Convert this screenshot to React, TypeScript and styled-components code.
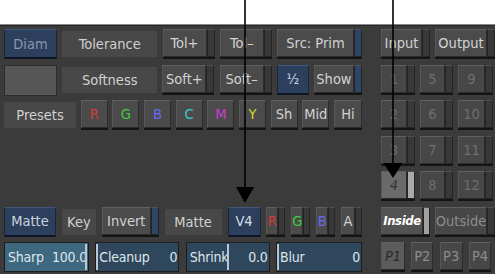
import styled, { createGlobalStyle } from 'styled-components'

const GlobalStyle = createGlobalStyle`
  html, body {
    margin: 0;
    padding: 0;
    background: #ffffff;
  }
  body {
    font-family: "DejaVu Sans Condensed", "DejaVu Sans", sans-serif;
    font-stretch: condensed;
  }
`

const Page = styled.div`
  position: relative;
  width: 495px;
  height: 274px;
  overflow: hidden;
  padding-top: 24px;
  box-sizing: border-box;
`

const Panel = styled.div`
  height: 250px;
  box-sizing: border-box;
  background: #3b3b3b;
  border-top: 1px solid #8a8a8a;
  box-shadow: inset 0 1px 0 #262626;
  padding: 4px 0 0 4px;
  display: flex;
  gap: 19px;
`

const Area = styled.div<{ $w: number }>`
  width: ${p => p.$w}px;
  flex: none;
  display: grid;
  grid-template-rows: repeat(7, 30px);
  row-gap: 5.5px;
`

const Row = styled.div<{ $row?: number; $pr?: number }>`
  display: flex;
  justify-content: space-between;
  align-items: flex-start;
  padding-right: ${p => p.$pr || 0}px;
  ${p => (p.$row ? `grid-row: ${p.$row};` : '')}
`

const Btn = styled.div<{ $w: number }>`
  width: ${p => p.$w}px;
  height: 30px;
  flex: none;
  display: flex;
  box-sizing: border-box;
  border-bottom: 2px solid #141414;
`

const Face = styled.div<{ $bg?: string; $color?: string; $italic?: boolean; $bold?: boolean }>`
  flex: 1;
  display: flex;
  align-items: center;
  justify-content: center;
  background: ${p => p.$bg || '#4b4b4b'};
  border: 1px solid #2b2b2b;
  border-top-color: #606060;
  border-left-color: #575757;
  color: ${p => p.$color || '#d2d2d2'};
  font-size: ${p => (p.$bold ? '13px' : '14.5px')};
  letter-spacing: ${p => (p.$bold ? '-0.4px' : '0')};
  font-style: ${p => (p.$italic ? 'italic' : 'normal')};
  font-weight: ${p => (p.$bold ? 'bold' : 'normal')};
  white-space: nowrap;
  overflow: hidden;
`

const Strip = styled.div<{ $bg?: string; $w?: number }>`
  width: ${p => p.$w || 8}px;
  flex: none;
  box-sizing: border-box;
  background: ${p => p.$bg || '#383838'};
  border: 1px solid #242424;
  border-top-color: #505050;
`

const BlueBtn = styled.div<{ $w: number; $color: string }>`
  width: ${p => p.$w}px;
  height: 30px;
  flex: none;
  box-sizing: border-box;
  display: flex;
  align-items: center;
  justify-content: center;
  background: #2c405e;
  border: 1px solid #1a2538;
  border-top-color: #43597c;
  border-bottom: 2px solid #0e1524;
  color: ${p => p.$color};
  font-size: 14.5px;
`

const Flat = styled.div<{ $w: number }>`
  width: ${p => p.$w}px;
  height: 26px;
  align-self: center;
  flex: none;
  display: flex;
  align-items: center;
  justify-content: center;
  background: #484848;
  color: #d0d0d0;
  font-size: 14.5px;
`

const Swatch = styled.div`
  width: 53px;
  height: 31px;
  flex: none;
  box-sizing: border-box;
  background: #565656;
  border: 1px solid #2c2c2c;
`

const Field = styled.div<{ $w: number; $bg: string }>`
  position: relative;
  width: ${p => p.$w}px;
  height: 30px;
  flex: none;
  box-sizing: border-box;
  display: flex;
  align-items: center;
  justify-content: space-between;
  padding: 0 1px 0 3px;
  background: ${p => p.$bg};
  border: 1px solid #1c1c1c;
  border-top-color: #202020;
  color: #dfe5ea;
  font-size: 14px;
  letter-spacing: -0.2px;
  white-space: nowrap;
`

const Marker = styled.div`
  position: absolute;
  top: 1px;
  bottom: 1px;
  width: 2px;
  margin-left: -1px;
  background: #b8c6d0;
`

const Overlay = styled.svg`
  position: absolute;
  left: 0;
  top: 0;
  pointer-events: none;
`

type BtnProps = {
  w: number
  label: string
  face?: string
  color?: string
  strip?: string | false
  italic?: boolean
  bold?: boolean
  stripW?: number
}

const Button = ({ w, label, face, color, strip = '#383838', italic, bold, stripW }: BtnProps) => (
  <Btn $w={w}>
    <Face $bg={face} $color={color} $italic={italic} $bold={bold}>{label}</Face>
    {strip !== false && <Strip $bg={strip} $w={stripW} />}
  </Btn>
)

const Slider = ({ w, bg, label, value, pos }: { w: number; bg: string; label: string; value: string; pos: number }) => (
  <Field $w={w} $bg={bg}>
    <span>{label}</span>
    <span>{value}</span>
    <Marker style={{ left: `${pos}%` }} />
  </Field>
)

const BLUE_STRIP = '#2d4566'
const DIM = '#6e6e6e'
const DIM_FACE = '#474747'

const colorKeys = [
  { l: 'R', c: '#d93a3a' },
  { l: 'G', c: '#3ccf3c' },
  { l: 'B', c: '#6a6af0' },
  { l: 'C', c: '#3cc8c8' },
  { l: 'M', c: '#cf3ccf' },
  { l: 'Y', c: '#d8d830' },
  { l: 'Sh', c: '#d2d2d2' },
  { l: 'Mid', c: '#d2d2d2' },
  { l: 'Hi', c: '#d2d2d2' },
]

const numRows = [
  ['1', '5', '9'],
  ['2', '6', '10'],
  ['3', '7', '11'],
  ['4', '8', '12'],
]
const numW = [34, 33, 35]

export default function App() {
  return (
    <Page>
      <GlobalStyle />
      <Panel>
        <Area $w={358}>
          <Row>
            <BlueBtn $w={53} $color="#8596ae">Diam</BlueBtn>
            <Flat $w={95}>Tolerance</Flat>
            <Button w={52} label="Tol+" />
            <Button w={52} label="Tol–" />
            <Button w={85} label="Src: Prim" strip={BLUE_STRIP} />
          </Row>
          <Row>
            <Swatch />
            <Flat $w={95}>Softness</Flat>
            <Button w={52} label="Soft+" />
            <Button w={52} label="Soft–" />
            <BlueBtn $w={32} $color="#cdd5de">½</BlueBtn>
            <Button w={48} label="Show" strip={BLUE_STRIP} />
          </Row>
          <Row>
            <Flat $w={72}>Presets</Flat>
            {colorKeys.map(k => (
              <Button key={k.l} w={k.l === 'Hi' ? 28 : 27} label={k.l} color={k.c} strip={false} />
            ))}
          </Row>
          <Row $row={6}>
            <BlueBtn $w={52} $color="#cad2db">Matte</BlueBtn>
            <Flat $w={34}>Key</Flat>
            <Button w={57} label="Invert" strip={BLUE_STRIP} />
            <Flat $w={57}>Matte</Flat>
            <BlueBtn $w={33} $color="#d5dce4">V4</BlueBtn>
            <Button w={19} label="R" color="#d93a3a" stripW={7} />
            <Button w={19} label="G" color="#3ccf3c" stripW={7} />
            <Button w={19} label="B" color="#6a6af0" stripW={7} />
            <Button w={21} label="A" stripW={7} />
          </Row>
          <Row $row={7}>
            <Slider w={85} bg="#3d6880" label="Sharp" value="100.0" pos={98} />
            <Slider w={84} bg="#2e475c" label="Cleanup" value="0" pos={1} />
            <Slider w={84} bg="#2e475c" label="Shrink" value="0.0" pos={50} />
            <Slider w={86} bg="#2e475c" label="Blur" value="0" pos={1} />
          </Row>
        </Area>
        <Area $w={114}>
          <Row>
            <Button w={49} label="Input" />
            <Button w={60} label="Output" />
          </Row>
          {numRows.map(r => (
            <Row key={r[0]} $pr={2}>
              {r.map((n, i) =>
                n === '4' ? (
                  <Button key={n} w={numW[i]} label={n} face="#6a6a6a" color="#333333" strip="#aaaaaa" italic />
                ) : (
                  <Button key={n} w={numW[i]} label={n} face={DIM_FACE} color={DIM} />
                )
              )}
            </Row>
          ))}
          <Row>
            <Button w={49} label="Inside" face="#525252" color="#ffffff" strip="#a0a0a0" stripW={7} italic bold />
            <Button w={60} label="Outside" face={DIM_FACE} color="#8c8c8c" />
          </Row>
          <Row $pr={4}>
            <Button w={24} label="P1" face="#5c5c5c" color="#2c2c2c" strip={false} italic />
            <Button w={22} label="P2" face={DIM_FACE} color="#8c8c8c" strip={false} />
            <Button w={23} label="P3" face={DIM_FACE} color="#8c8c8c" strip={false} />
            <Button w={22} label="P4" face={DIM_FACE} color="#8c8c8c" strip={false} />
          </Row>
        </Area>
      </Panel>
      <Overlay width={495} height={274} viewBox="0 0 495 274">
        <line x1={245} y1={0} x2={245} y2={190} stroke="#000" strokeWidth={1.6} />
        <polygon points="236,187 254,187 245,203" fill="#000" />
        <line x1={393} y1={0} x2={393} y2={165} stroke="#000" strokeWidth={1.6} />
        <polygon points="383.5,163 402.5,163 393,178" fill="#000" />
      </Overlay>
    </Page>
  )
}
